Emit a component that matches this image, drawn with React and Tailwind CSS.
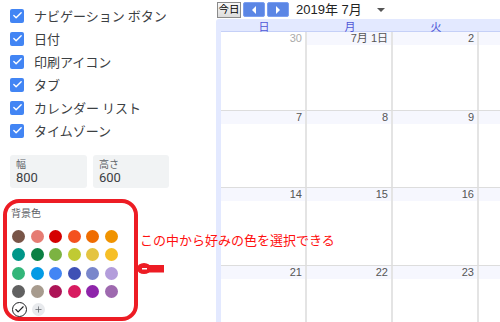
import { Check, Plus } from 'lucide-react'

const jp = { fontFamily: '"Noto Sans CJK JP", "Noto Sans", sans-serif' }
const num = { fontFamily: '"Liberation Sans", "Noto Sans CJK JP", sans-serif' }

const items = ['ナビゲーション ボタン', '日付', '印刷アイコン', 'タブ', 'カレンダー リスト', 'タイムゾーン']

const colors = [
  ['#795548', '#e67c73', '#d50000', '#f4511e', '#ef6c00', '#f09300'],
  ['#009688', '#0b8043', '#7cb342', '#c0ca33', '#e4c441', '#f6bf26'],
  ['#33b679', '#039be5', '#4285f4', '#3f51b5', '#7986cb', '#b39ddb'],
  ['#616161', '#a79b8e', '#ad1457', '#d81b60', '#8e24aa', '#9e69af'],
]

// the fourth column runs past the window edge, so its number is not visible
const weeks = [
  [{ d: '30', other: true }, { d: '7月 1日' }, { d: '2' }, { d: '' }],
  [{ d: '7' }, { d: '8' }, { d: '9' }, { d: '' }],
  [{ d: '14' }, { d: '15' }, { d: '16' }, { d: '' }],
  [{ d: '21' }, { d: '22' }, { d: '23' }, { d: '' }],
]
const rowH = ['h-[78px]', 'h-[77px]', 'h-[78px]', 'h-[78px]']

function Sidebar() {
  return (
    <div className="w-[216px] shrink-0 pt-[4px]" style={jp}>
      {items.map(t => (
        <div key={t} className="h-[23px] flex items-center pl-[10px] gap-[10px]">
          <span className="w-[14px] h-[14px] rounded-[2px] bg-[#4285f4] flex items-center justify-center">
            <Check size={11} strokeWidth={3} className="text-white" />
          </span>
          <span className="text-[13px] text-[#3c4043] leading-none">{t}</span>
        </div>
      ))}

      <div className="flex gap-[6px] pl-[10px] mt-[13px]">
        {[['幅', '800'], ['高さ', '600']].map(([l, v], i) => (
          <div key={l} className={`${i === 0 ? 'w-[77px]' : 'w-[76px]'} h-[33px] rounded-[3px] bg-[#f1f3f4] pl-[6px] pt-[3px]`}>
            <div className="text-[10px] leading-[12px] text-[#5f6368]">{l}</div>
            <div className="text-[13px] leading-[16px] text-[#3c4043]" style={{ fontFamily: 'Roboto, sans-serif' }}>{v}</div>
          </div>
        ))}
      </div>

      <div className="pl-[11px] mt-[19px] text-[10px] leading-[12px] text-[#5f6368]">背景色</div>
      <div className="pl-[12px] mt-[11px] flex flex-col gap-[5.4px]">
        {colors.map((row, r) => (
          <div key={r} className="flex gap-[5.5px]">
            {row.map(c => (
              <span key={c} className="w-[13px] h-[13px] rounded-full" style={{ backgroundColor: c }} />
            ))}
          </div>
        ))}
      </div>
      <div className="pl-[12px] mt-[4px] flex items-center gap-[5px]">
        <span className="w-[15px] h-[15px] rounded-full border border-[#202124] bg-white flex items-center justify-center">
          <Check size={11} strokeWidth={2.5} className="text-[#202124]" />
        </span>
        <span className="w-[13px] h-[13px] rounded-full bg-[#e8eaed] flex items-center justify-center">
          <Plus size={9} strokeWidth={2} className="text-[#5f6368]" />
        </span>
      </div>
    </div>
  )
}

function Calendar() {
  return (
    <div className="flex-1 flex flex-col">
      <div className="h-[19px] flex items-center pl-[1px] gap-[2px]">
        <button className="h-[16px] w-[24px] px-0 border border-[#8a8a8a] bg-gradient-to-b from-[#f8f8f8] to-[#dcdcdc] text-[10.5px] leading-none text-black whitespace-nowrap flex items-center justify-center" style={jp}>今日</button>
        <button className="h-[15px] w-[22px] rounded-[2px] bg-[#5b86e5] border border-[#7c9ff0] flex items-center justify-center">
          <span className="w-0 h-0 border-y-[4px] border-y-transparent border-r-[4px] border-r-white" />
        </button>
        <button className="h-[15px] w-[22px] rounded-[2px] bg-[#5b86e5] border border-[#7c9ff0] flex items-center justify-center">
          <span className="w-0 h-0 border-y-[4px] border-y-transparent border-l-[4px] border-l-white" />
        </button>
        <span className="ml-[5px] text-[13px] text-[#222] leading-none whitespace-nowrap" style={num}>2019年 7月</span>
        <span className="ml-[13px] mt-[1px] w-0 h-0 border-x-[4px] border-x-transparent border-t-[4px] border-t-[#555]" />
      </div>
      <div className="flex-1 bg-[#e3e9ff] rounded-tl-[3px] pl-[5px] overflow-hidden">
        <div className="h-[13px] grid grid-cols-[86px_86px_86px_86px] border-b border-[#c5d0f7]">
          {['日', '月', '火', ''].map((d, i) => (
            <div key={i} className="text-center text-[11px] leading-[15px] text-[#4e56d6]" style={jp}>{d}</div>
          ))}
        </div>
        <div className="bg-white">
          {weeks.map((w, i) => (
            <div key={i} className={`${rowH[i]} grid grid-cols-[86px_86px_86px_86px] ${i > 0 ? 'border-t border-[#dddddd]' : ''}`}>
              {w.map((c, j) => (
                <div key={j} className="border-r-[2px] border-[#e4e4e4]">
                  <div className={`h-[13px] text-right pr-[3px] text-[11px] leading-[13px] ${c.other ? 'text-[#aaaaaa] bg-white' : 'text-[#555555] bg-[#f6f7fe]'}`} style={num}>{c.d}</div>
                </div>
              ))}
            </div>
          ))}
        </div>
      </div>
    </div>
  )
}

export default function App() {
  return (
    <div className="relative w-[500px] h-[322px] bg-white overflow-hidden flex">
      <Sidebar />
      <Calendar />

      <div className="absolute left-[3px] top-[199px] w-[135px] h-[122px] border-[4px] border-[#ed1c24] rounded-[16px]" />
      <svg className="absolute left-[137px] top-[262px]" width="27" height="13" viewBox="0 0 27 13">
        <ellipse cx="7" cy="6.5" rx="7" ry="5.5" fill="#ed1c24" />
        <rect x="11" y="3" width="16" height="7.5" fill="#ed1c24" />
        <rect x="5" y="6" width="5" height="1.5" fill="#fff" />
      </svg>
      <div className="absolute left-[140px] top-[231px] text-[13px] leading-[18px] text-[#ff1010] whitespace-nowrap" style={jp}>
        この中から好みの色を選択できる
      </div>
    </div>
  )
}
